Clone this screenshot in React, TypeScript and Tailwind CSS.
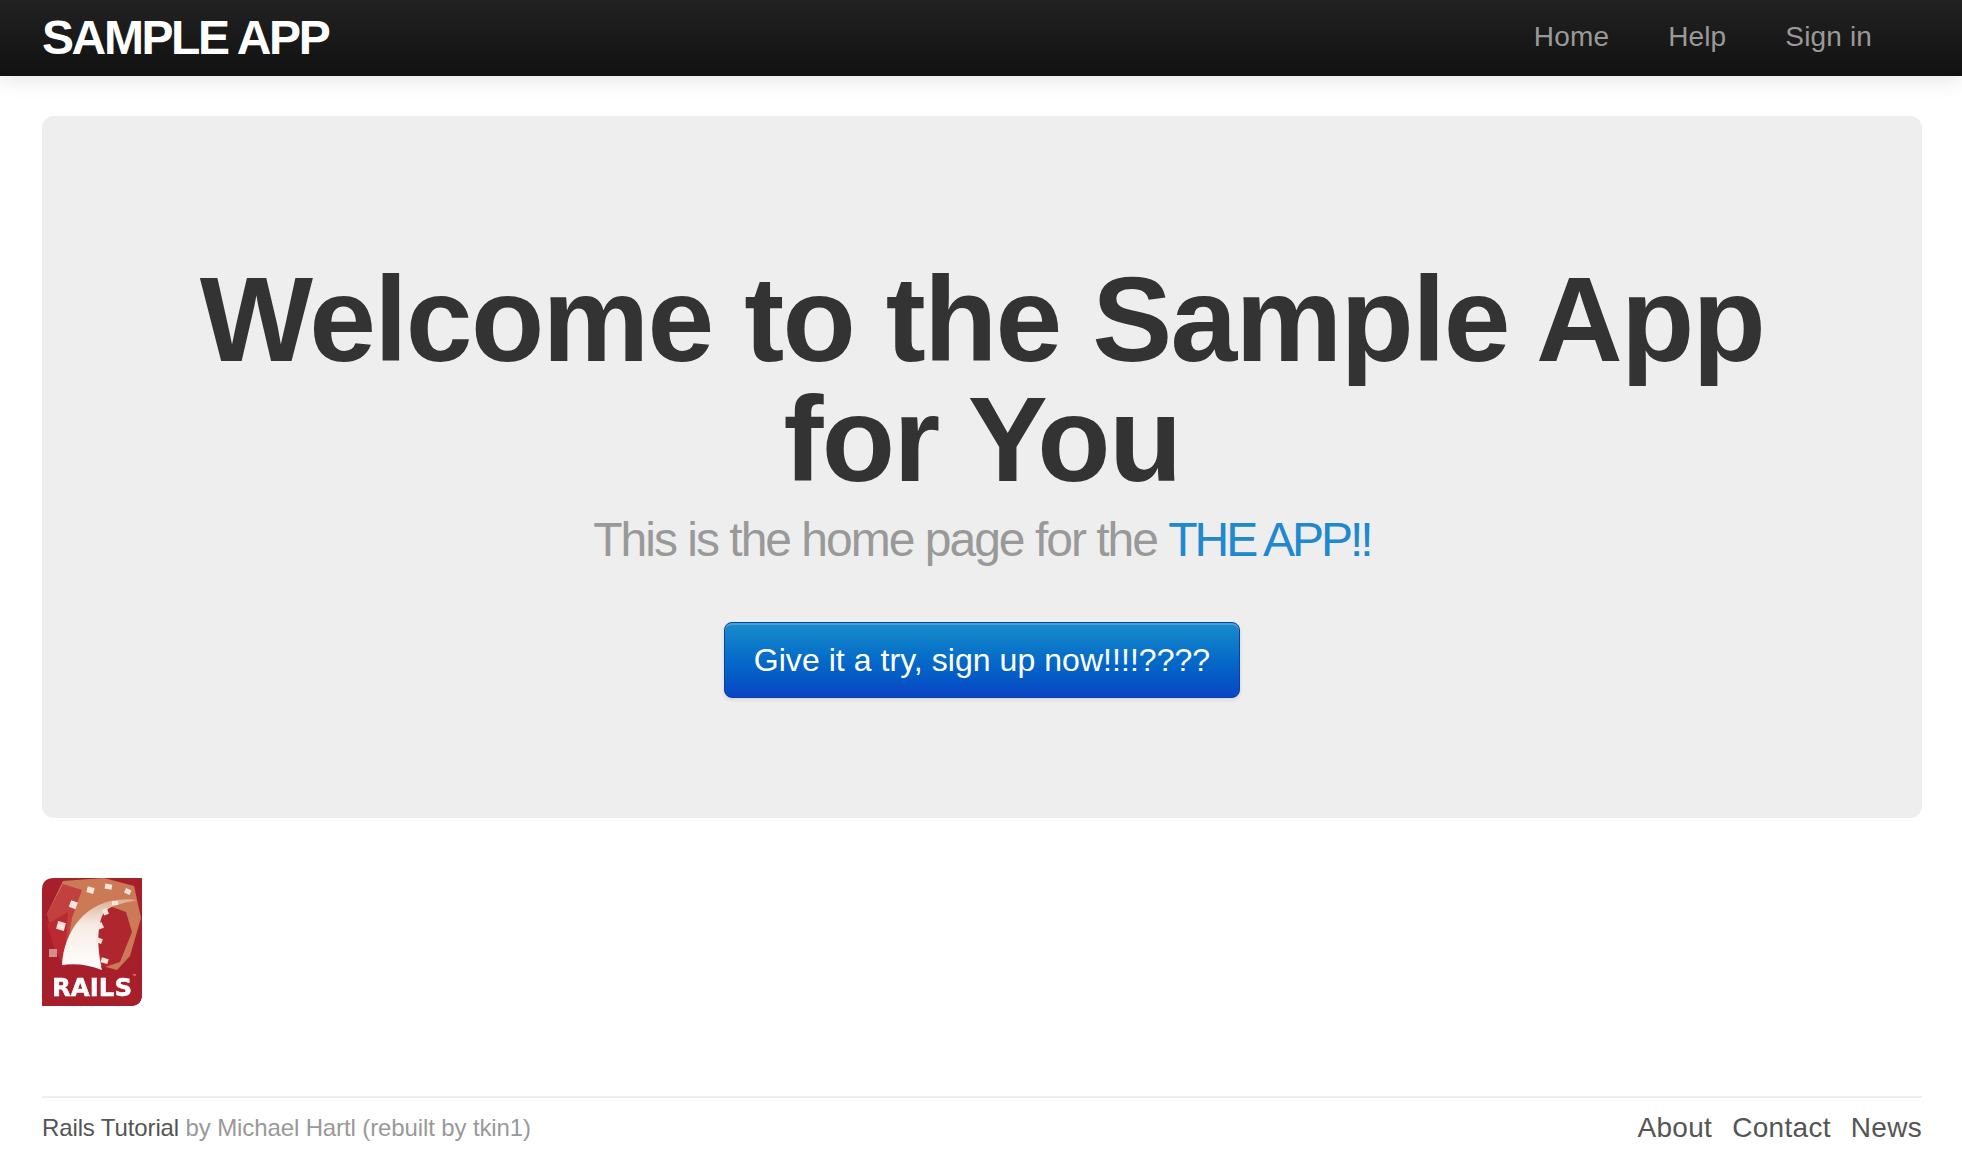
function RailsLogo() {
  return (
    <svg width="100" height="128" viewBox="0 0 100 128" className="block blur-[0.5px]">
      <defs>
        <linearGradient id="rail" x1="0" y1="0" x2="0" y2="1">
          <stop offset="0" stopColor="#dcae96" />
          <stop offset="0.35" stopColor="#f6ebe4" />
          <stop offset="1" stopColor="#ffffff" />
        </linearGradient>
      </defs>
      <path d="M12 0H100V116Q100 128 88 128H0V12Q0 0 12 0Z" fill="#a81f2c" />
      <path d="M21 3L62 0L92 8L99 40L88 78L75 92L30 80L5 36Z" fill="#cc7a55" />
      <path d="M5 36L21 6L40 12L30 40L22 90L12 66Z" fill="#c0413f" />
      <path d="M5 46L26 34L22 90L12 70Z" fill="#bb2a32" />
      <path d="M62 26L84 34L90 54L78 84L60 90L54 58Z" fill="#b0262e" />
      <path d="M0 62L14 72L24 96L100 98V116Q100 128 88 128H0Z" fill="#a81f2c" />
      <path d="M20 87C22 52 46 16 95 22C80 25 66 28 61 36C54 50 56 76 60 92Q40 84 20 87Z" fill="url(#rail)" />
      <g fill="#f8e6dc">
        <rect x="45" y="9" width="7" height="6" transform="rotate(15 48 12)" />
        <rect x="63" y="6" width="7" height="5" transform="rotate(10 66 8)" />
        <rect x="83" y="11" width="6" height="5" transform="rotate(25 86 13)" />
        <rect x="28" y="23" width="7" height="7" transform="rotate(20 31 26)" />
        <rect x="15" y="44" width="8" height="8" transform="rotate(15 19 48)" />
        <rect x="7" y="71" width="8" height="8" fillOpacity="0.55" />
        <rect x="61" y="31" width="5" height="6" transform="rotate(-20 63 34)" />
        <rect x="56" y="45" width="5" height="6" transform="rotate(-25 58 48)" />
        <rect x="54" y="60" width="6" height="5" transform="rotate(20 57 63)" />
        <rect x="59" y="80" width="7" height="5" transform="rotate(15 62 83)" />
        <rect x="70" y="23" width="6" height="4" />
      </g>
      <text x="10" y="118" fill="#ffffff" stroke="#ffffff" strokeWidth="0.5" fontFamily="'DejaVu Sans', sans-serif" fontWeight="700" fontSize="25" textLength="80" lengthAdjust="spacingAndGlyphs">RAILS</text>
      <text x="90" y="100" fill="#f0d0c8" fontFamily="'DejaVu Sans', sans-serif" fontSize="5">™</text>
    </svg>
  );
}

export default function App() {
  return (
    <div className="min-h-[1168px] bg-white font-['Liberation_Sans',Arial,sans-serif] text-[#333]">
      {/* navbar */}
      <header className="flex h-[76px] items-center justify-between bg-gradient-to-b from-[#222222] to-[#111111] pl-[42px] pr-[90px] shadow-[0_4px_20px_rgba(0,0,0,0.1)]">
        <a className="text-[48px] font-bold leading-none tracking-[-2.4px] text-white">SAMPLE APP</a>
        <nav className="-mt-[2px] flex gap-[59px] text-[28px] tracking-[0.15px] text-[#999999]">
          <a>Home</a>
          <a>Help</a>
          <a>Sign in</a>
        </nav>
      </header>

      <main className="pl-[42px] pr-[40px] pt-[40px]">
        {/* hero */}
        <section className="flex h-[702px] flex-col items-center rounded-[12px] bg-[#eeeeee] pt-[143px]">
          <h1 className="text-center text-[120px] font-bold leading-[120px] tracking-[-1.7px] text-[#333333]">
            Welcome to the Sample App
            <br />
            for You
          </h1>
          <h2 className="mt-[11px] text-[48px] leading-[60px] tracking-[-2px] text-[#999999]">
            This is the home page for the <a className="tracking-[-3px] text-[#2088cc]">THE APP!!</a>
          </h2>
          <button className="mt-[52px] h-[76px] w-[516px] rounded-[8px] border border-[#0a3fa8] bg-gradient-to-b from-[#1a8cca] to-[#0c44c4] text-[32px] tracking-[0.05px] text-white shadow-[inset_0_2px_0_rgba(255,255,255,0.2),0_2px_4px_rgba(0,0,0,0.1)]">
            Give it a try, sign up now!!!!????
          </button>
        </section>

        <div className="mt-[60px]">
          <RailsLogo />
        </div>

        {/* footer */}
        <footer className="mt-[90px] flex items-center justify-between border-t-2 border-[#eeeeee] pt-[10px] leading-[40px]">
          <p className="text-[24px] tracking-[-0.12px] text-[#999999]">
            <a className="text-[#555555]">Rails Tutorial</a> by Michael Hartl (rebuilt by tkin1)
          </p>
          <nav className="flex gap-[20px] text-[28px] tracking-[0.3px] text-[#555555]">
            <a>About</a>
            <a>Contact</a>
            <a>News</a>
          </nav>
        </footer>
      </main>
    </div>
  );
}
